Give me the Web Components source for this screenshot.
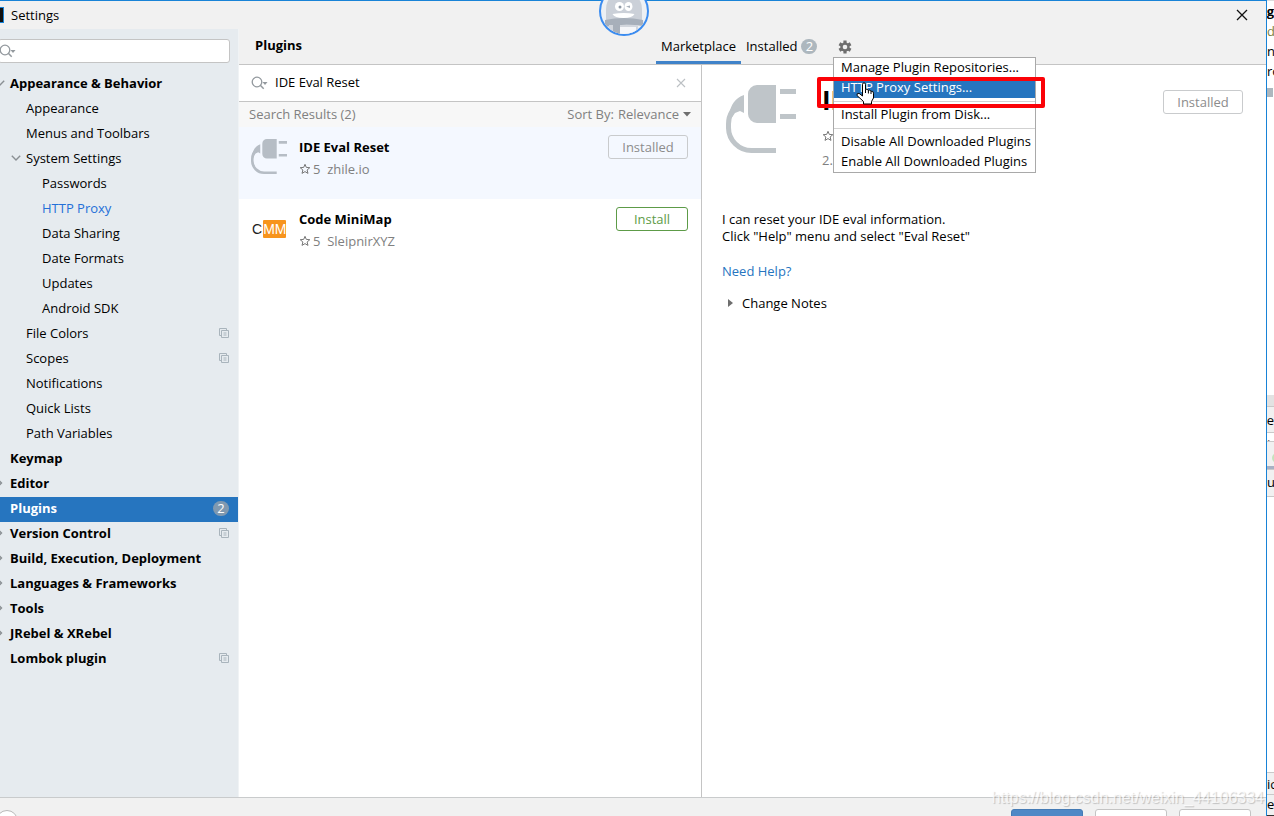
<!DOCTYPE html>
<html lang="en">
<head>
<meta charset="utf-8">
<title>Settings</title>
<style>
  html, body { margin: 0; height: 100%; overflow: hidden; background: #fff; }
  body { font: 13px/20px "Open Sans", "Noto Sans", sans-serif; color: #000; }
</style>
</head>
<body>
<settings-app></settings-app>
<script>
const define = (name, html, setup) => customElements.define(name, class extends HTMLElement {
  connectedCallback() {
    if (this.shadowRoot) return;
    const root = this.attachShadow({ mode: "open" });
    const template = document.createElement("template");
    template.innerHTML = "<style>*{box-sizing:border-box}button,input,select{font:inherit;margin:0}</style>" +
      (typeof html === "function" ? html(this) : html);
    root.append(template.content.cloneNode(true));
    if (setup) setup(this, root);
  }
});

const icons = {
  search: `<svg width="17" height="14" viewBox="0 0 17 14"><circle cx="6" cy="6" r="4.8" fill="none" stroke="#93999e" stroke-width="1.3"/><path d="M9.3 9.3 12.7 12.7" stroke="#93999e" stroke-width="1.5"/><path d="M11.5 6h5L14 9z" fill="#93999e"/></svg>`,
  close: `<svg width="12" height="12" viewBox="0 0 12 12"><path d="M1 1 11 11M11 1 1 11" stroke="currentColor" stroke-width="1.3"/></svg>`,
  clear: `<svg width="10" height="10" viewBox="0 0 10 10"><path d="M1 1 9 9M9 1 1 9" stroke="#bcc0c4" stroke-width="1.1"/></svg>`,
  down: `<svg width="10" height="10" viewBox="0 0 10 10"><path d="M.8 2.8 5 7 9.2 2.8" fill="none" stroke="#8a8f93" stroke-width="1.4"/></svg>`,
  right: `<svg width="10" height="10" viewBox="0 0 10 10"><path d="M2.500 1 6.500 5 2.500 9" fill="none" stroke="#8a8f93" stroke-width="1.4"/></svg>`,
  copy: `<svg width="10" height="10" viewBox="0 0 10 10"><path d="M2 7.5H.5v-7h7V2M2.500 2.500h7v7h-7zM4.500 5h3M4.500 7h3" fill="none" stroke="#a9b4bc"/></svg>`,
  star: `<svg width="12" height="12" viewBox="0 0 12 12"><path d="M6 1.300 7.300 4.400 10.800 4.700 8.100 7 9 10.400 6 8.600 3 10.400 3.900 7 1.200 4.700 4.700 4.400z" fill="none" stroke="#777"/></svg>`,
  gear: `<svg width="14" height="14" viewBox="0 0 14 14"><g stroke="#6e6e6e" stroke-width="3.200"><path d="M7 .5v13M1.400 3.750l11.200 6.500M1.400 10.250l11.200-6.500"/></g><circle cx="7" cy="7" r="4.600" fill="#6e6e6e"/><circle cx="7" cy="7" r="2.300" fill="#f1f1f1"/></svg>`,
  plug: (size, color) => `<svg width="${size}" height="${size}" viewBox="0 0 70 70"><g fill="${color}"><path d="M31 0h19v38H31a9 9 0 0 1-9-9V9a9 9 0 0 1 9-9zM54 4h16v5H54zM54 29h16v5H54zM18 10v18l-4-2-5 2-4 6-2-5C5 20 9 13 18 10z"/></g><path d="M15 19C8 22 2.500 29 2.500 39v3A23 23 0 0 0 26 65.500h24" fill="none" stroke="${color}" stroke-width="5"/></svg>`
};

define("count-badge", `<style>:host{display:inline-flex;width:16px;height:15px;border-radius:8px;align-items:center;justify-content:center;background:#adb7be;color:#fff;line-height:15px}:host([on-blue]){background:#8099b0}</style><slot></slot>`);

define("search-field", el => `<style>
  :host{display:flex;align-items:center;background:#fff;gap:7px}
  input{flex:1;min-width:0;border:0;outline:0;padding:0 0 2px;background:none;color:#000;height:20px}
  button{border:0;background:none;padding:0;width:10px;display:flex}
  svg{flex:none}
  </style>${icons.search}<input type="text" aria-label="${el.getAttribute("label")}" value="${el.getAttribute("value") || ""}">
  ${el.hasAttribute("clearable") ? `<button aria-label="Clear">${icons.clear}</button>` : ""}`);

define("tree-item", el => `<style>
  :host{display:block}
  a{display:flex;align-items:center;height:25px;padding:0 9px 3px 20px;color:#000;text-decoration:none}
  .arrow{width:10px;margin-left:-15px;margin-right:5px;display:flex}
  .label{flex:1;white-space:nowrap}
  :host([level="0"]) a{font-weight:700}
  :host([level="1"]) a{padding-left:36px}
  :host([level="2"]) a{padding-left:52px}
  :host([modified]) a{color:#2470d8}
  :host([selected]) a{background:#2675bf;color:#fff}
  count-badge{font-weight:400}
  </style><a href="#"><span class="arrow">${icons[el.getAttribute("arrow")] || ""}</span><span class="label"><slot></slot></span>
  ${el.hasAttribute("copy") ? icons.copy : ""}${el.hasAttribute("count") ? `<count-badge on-blue>${el.getAttribute("count")}</count-badge>` : ""}</a>`);

define("settings-sidebar", `<style>
  :host{display:block;background:#e6ebef;border-right:1px solid #f0f3f5;padding-top:10px}
  search-field{height:24px;margin:0 8px 9px;padding-left:0;border:1px solid #c4c4c4;border-radius:3px}
  </style><search-field label="Search settings"></search-field>
  <nav aria-label="Settings">
  <tree-item level="0" arrow="down">Appearance &amp; Behavior</tree-item>
  <tree-item level="1">Appearance</tree-item>
  <tree-item level="1">Menus and Toolbars</tree-item>
  <tree-item level="1" arrow="down">System Settings</tree-item>
  <tree-item level="2">Passwords</tree-item>
  <tree-item level="2" modified>HTTP Proxy</tree-item>
  <tree-item level="2">Data Sharing</tree-item>
  <tree-item level="2">Date Formats</tree-item>
  <tree-item level="2">Updates</tree-item>
  <tree-item level="2">Android SDK</tree-item>
  <tree-item level="1" copy>File Colors</tree-item>
  <tree-item level="1" copy>Scopes</tree-item>
  <tree-item level="1">Notifications</tree-item>
  <tree-item level="1">Quick Lists</tree-item>
  <tree-item level="1">Path Variables</tree-item>
  <tree-item level="0">Keymap</tree-item>
  <tree-item level="0" arrow="right">Editor</tree-item>
  <tree-item level="0" selected count="2">Plugins</tree-item>
  <tree-item level="0" arrow="right" copy>Version Control</tree-item>
  <tree-item level="0" arrow="right">Build, Execution, Deployment</tree-item>
  <tree-item level="0" arrow="right">Languages &amp; Frameworks</tree-item>
  <tree-item level="0" arrow="right">Tools</tree-item>
  <tree-item level="0" arrow="right">JRebel &amp; XRebel</tree-item>
  <tree-item level="0" copy>Lombok plugin</tree-item>
  </nav>`);

define("action-button", `<style>:host{display:block}
  button{width:80px;height:24px;border:1px solid #c9cbcd;border-radius:3px;background:transparent;color:#8c8c8c;padding:0;line-height:20px;display:block}
  :host([primary]) button{width:72px;border-color:#5d9b48;color:#5d9b48;background:#fff}
  </style><button type="button"><slot></slot></button>`);

define("plugin-card", `<style>
  :host{display:flex;height:72px;padding:8px 13px 0 12px}
  :host([selected]){background:#f4f8ff}
  .icon{width:48px;padding-top:4px}
  .text{flex:1}
  h3{margin:2px 0;font-size:13px;line-height:20px}
  p{margin:0;display:flex;align-items:center;color:#808080;white-space:pre}
  p svg{margin-right:2px}
  </style><div class="icon"><slot name="icon"></slot></div>
  <div class="text"><h3><slot name="name"></slot></h3><p>${icons.star}<slot name="meta"></slot></p></div>
  <slot name="action"></slot>`);

define("plugin-list", `<style>
  :host{display:block;border-right:1px solid #c4c4c4}
  search-field{height:37px;padding:0 15px 0 12px;border-bottom:1px solid #c4c4c4}
  .bar{display:flex;justify-content:space-between;height:25px;background:#f7f7f7;color:#808080;padding:2px 10px 0}
  label{display:flex}
  .pick{display:grid;align-items:center;height:20px}
  select,.pick svg{grid-area:1/1}
  select{appearance:none;field-sizing:content;border:0;background:none;color:inherit;padding:0 12px 0 4px;height:20px}
  .pick svg{justify-self:end;pointer-events:none}
  .cmm{display:flex;align-items:center;gap:1px;height:36px;font:14px/17px "Liberation Sans",sans-serif;color:#222;padding-left:1px}
  .cmm b{font-weight:400;background:#f7941d;color:#fff;border-radius:1px;height:18px;line-height:18px}
  </style>
  <search-field label="Search plugins" value="IDE Eval Reset" clearable></search-field>
  <div class="bar"><span>Search Results (2)</span><label>Sort By:<span class="pick"><select><option>Relevance</option></select><svg width="8" height="5" viewBox="0 0 8 5"><path d="M0 0h8L4 4.500z" fill="#6e6e6e"/></svg></span></label></div>
  <plugin-card selected><span slot="icon">${icons.plug(36, "#b6bdc5")}</span><span slot="name">IDE Eval Reset</span><span slot="meta">5  zhile.io</span><action-button slot="action">Installed</action-button></plugin-card>
  <plugin-card><span slot="icon" class="cmm">C<b>MM</b></span><span slot="name">Code MiniMap</span><span slot="meta">5  SleipnirXYZ</span><action-button primary slot="action">Install</action-button></plugin-card>`);

define("plugin-detail", `<style>
  :host{display:block;background:#fff;padding:20px 23px 0 20px}
  header{display:flex;height:126px}
  .icon{padding-left:4px;width:100px}
  .info{flex:1;min-width:0}
  h1{margin:0;font-size:26px;line-height:30px;white-space:nowrap}
  .rate{display:flex;margin-top:15px}
  .version{margin:10px 0 0;color:#808080}
  action-button{margin-top:5px}
  p{margin:0;line-height:17px}
  a{display:block;color:#2675bf;text-decoration:none;margin:16px 0 12px}
  summary{list-style:none;display:flex;align-items:center;gap:9px;padding-left:6px}
  </style>
  <header><div class="icon">${icons.plug(70, "#bfc5c9")}</div>
  <div class="info"><h1>IDE Eval Reset</h1><div class="rate">${icons.star}</div><p class="version">2.</p></div>
  <action-button>Installed</action-button></header>
  <p>I can reset your IDE eval information.<br>Click "Help" menu and select "Eval Reset"</p>
  <a href="#">Need Help?</a>
  <details><summary><svg width="5" height="8" viewBox="0 0 5 8"><path d="M0 0 5 4 0 8z" fill="#6e6e6e"/></svg>Change Notes</summary></details>`);

define("gear-menu", `<style>
  :host{display:block;width:203px;border:1px solid #a9a9a9;background:#fff}
  button{display:block;width:100%;height:20px;border:0;background:none;padding:0 7px 2px;text-align:left;line-height:18px;white-space:nowrap;color:#000}
  button.hot{background:#2675bf;color:#fff}
  hr{margin:3px 0;border:0;height:1px;background:#d1d1d1}
  .mark{position:absolute;left:-17px;right:-10px;top:19px;height:31px;border:4px solid #fb0207;border-radius:2px}
  .hand{position:absolute;left:22px;top:24px}
  </style><div role="menu">
  <button role="menuitem">Manage Plugin Repositories...</button>
  <button role="menuitem" class="hot">HTTP Proxy Settings...</button><hr>
  <button role="menuitem">Install Plugin from Disk...</button><hr>
  <button role="menuitem">Disable All Downloaded Plugins</button>
  <button role="menuitem">Enable All Downloaded Plugins</button></div>
  <div class="mark"></div>
  <svg class="hand" width="19" height="23" viewBox="0 0 19 23"><path d="M6.500 14V2.500Q6.500.8 8 .8t1.500 1.700V7.500Q11 6.500 12.300 8.300 14 7.500 15 9.200q2.500-.5 2.500 2V16l-2 3.500V22h-8v-2.500L1 13.500Q.5 11 3 11.300z" fill="#fff" stroke="#000"/><path d="M9.500 7.500V11M12.400 8.300V11.500M15 9.200V12" stroke="#000"/></svg>`);

define("plugins-header", `<style>
  :host{display:grid;grid-template-columns:401px 177px 1fr;height:36px;border-bottom:1px solid #c4c4c4;padding-left:16px}
  h2{margin:0;font-size:13px;line-height:20px;padding-top:6px}
  .tabs{display:flex}
  .tabs button{border:0;background:none;padding:0 5px 1px;line-height:20px;display:flex;align-items:center;gap:4px;height:35px;color:#000}
  .tabs .on{border-bottom:3px solid #4083c9;padding-top:2px;padding-bottom:0}
  .tool{position:relative;padding:10px 0 0 5px}
  .gear{border:0;background:none;padding:0;width:14px;height:14px;display:block}
  gear-menu{position:absolute;left:0;top:28px;z-index:2}
  </style><h2>Plugins</h2>
  <div class="tabs"><button class="on">Marketplace</button><button>Installed<count-badge>2</count-badge></button></div>
  <div class="tool"><button class="gear" aria-label="Plugin settings">${icons.gear}</button><gear-menu></gear-menu></div>`);

define("user-avatar", `<style>:host{display:block}svg{display:block}</style>
  <svg width="50" height="50" viewBox="0 0 50 50"><defs><clipPath id="c"><circle cx="25" cy="25" r="23"/></clipPath></defs>
  <circle cx="25" cy="25" r="24" fill="#edf0f4" stroke="#3b8cf0" stroke-width="2"/>
  <g clip-path="url(#c)"><path d="M7 34V23a18 18 0 0 1 36 0v11z" fill="#cbd0d8"/><path d="M6 34q19 -4 38 0v6q-19-3-38 1z" fill="#a7afba"/><path d="M10 39h29v11H10z" fill="#d2d6dd"/><path d="M14 39h7v12h-7z" fill="#a7afba"/><path d="M21 41h16v10H21z" fill="#f5f6f9"/>
  <ellipse cx="20.500" cy="20.500" rx="4.500" ry="4.500" fill="#fff"/><ellipse cx="29.500" cy="20.500" rx="4" ry="4.500" fill="#fff"/><circle cx="21" cy="21" r="1.500" fill="#909aa6"/><path d="M27 20.500l4-1v2.500z" fill="#a7afba"/><path d="M13.500 28q11.500-2 22 0-2 4-11 4t-11-4z" fill="#fff"/></g></svg>`);

define("dialog-footer", `<style>
  :host{display:flex;justify-content:space-between;height:50px;border-top:1px solid #c9cbcc;background:#f1f1f1;padding:11px 15px 0 6px}
  .actions{display:flex;gap:12px}
  .actions button{width:72px;height:24px;border:1px solid #c4c4c4;border-radius:3px;background:#fff}
  .actions .ok{background:#4f88c6;border-color:#457bb5}
  .help{width:22px;height:22px;border:1px solid #b9b9b9;border-radius:50%;background:#fff;padding:0;line-height:18px;margin-top:1px;font-weight:700;color:#555}
  </style><button class="help">?</button><div class="actions"><button class="ok" aria-label="OK"></button><button aria-label="Cancel"></button><button aria-label="Apply"></button></div>`);

define("editor-edge", `<style>
  :host{display:flex;flex-direction:column;overflow:hidden;background:#fff;line-height:18px}
  div{flex:none;white-space:nowrap;overflow:hidden}
  .bar{background:#f1f1f1;border-top:1px solid #c9c9c9}
  .tail{display:flex;justify-content:flex-end}
  </style>
  <div class="tail" style="height:22px;padding-top:1px;border-top:1px solid #ddd;font-weight:700">ng</div>
  <div style="height:20px;color:#808040">de</div><div style="height:20px">nt</div><div style="height:26px">ro</div>
  <div style="height:9px;width:6px;background:#adb7be"></div><div style="height:298px"></div>
  <div style="height:11px;background:#e2e2e2"></div>
  <div class="bar tail" style="height:26px;padding-top:4px">te</div>
  <div style="height:9px;line-height:9px;border-top:1px solid #c9c9c9">.</div>
  <div class="bar" style="height:25px"><svg width="7" height="25"><circle cx="10" cy="16" r="5" fill="#c5e3bd"/></svg></div>
  <div style="height:3px;background:#a8b1c4"></div>
  <div class="bar" style="height:28px;padding-top:3px;border-bottom:1px solid #c9c9c9">u</div>
  <div style="height:275px"></div>
  <div class="bar" style="height:22px;padding-top:2px">ic</div><div class="bar" style="height:21px">e</div><div style="height:1px;background:#333"></div>`);

define("settings-app", `<style>
  :host{display:flex;height:100vh;overflow:hidden;position:relative}
  .window{flex:1;min-width:0;height:calc(100vh + 32px);margin-left:-10px;display:grid;grid-template-rows:28px 1fr auto;border:1px solid #1883d7;border-left:0;background:#f1f1f1}
  .title{display:flex;align-items:center;padding:0 18px 0 0}
  .logo{width:14px;height:16px;background:#111;border:1px solid #1883d7;margin-right:7px}
  .title span{flex:1}
  .title button{border:0;background:none;padding:0;display:flex;color:#111}
  .body{display:grid;grid-template-columns:249px 1fr;min-height:0}
  main{display:grid;grid-template-rows:36px 1fr;background:#fff;min-width:0;min-height:0}
  plugins-header{background:#f1f1f1}
  .split{display:grid;grid-template-columns:463px 1fr;min-height:0}
  editor-edge{width:7px}
  user-avatar{position:absolute;left:599px;top:-14px}
  .stamp{position:absolute;right:10px;bottom:8px;font:16px/20px "Liberation Sans",sans-serif;color:rgba(255,255,255,.75);text-shadow:1px 1px 1px rgba(0,0,0,.2)}
  </style>
  <div class="window">
    <div class="title"><i class="logo"></i><span>Settings</span><button aria-label="Close">${icons.close}</button></div>
    <div class="body"><settings-sidebar></settings-sidebar>
      <main><plugins-header></plugins-header><div class="split"><plugin-list></plugin-list><plugin-detail></plugin-detail></div></main></div>
    <dialog-footer></dialog-footer>
  </div>
  <editor-edge></editor-edge>
  <user-avatar></user-avatar>
  <div class="stamp">https://blog.csdn.net/weixin_44106334</div>`);
</script>
</body>
</html>
